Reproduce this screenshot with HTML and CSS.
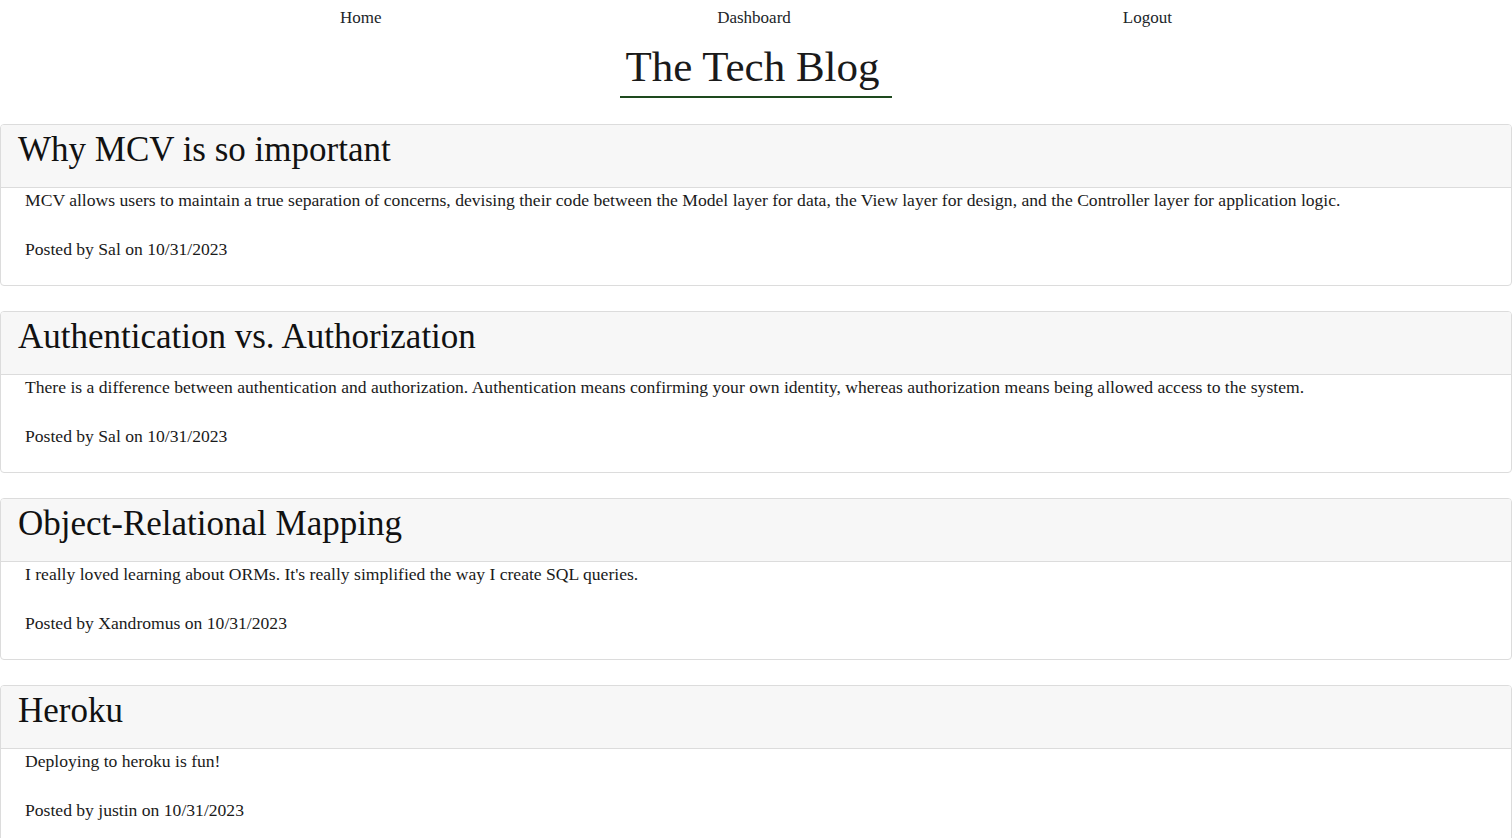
FILE: index.html
```html
<!DOCTYPE html>
<html lang="en">
<head>
<meta charset="utf-8">
<title>The Tech Blog</title>
<link rel="stylesheet" href="styles.css">
</head>
<body>
<header class="site-header">
  <nav class="nav">
    <a class="nav-link" href="#">Home</a>
    <a class="nav-link" href="#">Dashboard</a>
    <a class="nav-link" href="#">Logout</a>
  </nav>
  <div class="title-wrap">
    <h1 class="site-title">The Tech Blog</h1>
  </div>
</header>
<main class="posts">
  <article class="card">
    <div class="card-header"><h2 class="card-title">Why MCV is so important</h2></div>
    <div class="card-body">
      <p class="post-content">MCV allows users to maintain a true separation of concerns, devising their code between the Model layer for data, the View layer for design, and the Controller layer for application logic.</p>
      <p class="post-meta">Posted by Sal on 10/31/2023</p>
    </div>
  </article>
  <article class="card">
    <div class="card-header"><h2 class="card-title">Authentication vs. Authorization</h2></div>
    <div class="card-body">
      <p class="post-content">There is a difference between authentication and authorization. Authentication means confirming your own identity, whereas authorization means being allowed access to the system.</p>
      <p class="post-meta">Posted by Sal on 10/31/2023</p>
    </div>
  </article>
  <article class="card">
    <div class="card-header"><h2 class="card-title">Object-Relational Mapping</h2></div>
    <div class="card-body">
      <p class="post-content">I really loved learning about ORMs. It's really simplified the way I create SQL queries.</p>
      <p class="post-meta">Posted by Xandromus on 10/31/2023</p>
    </div>
  </article>
  <article class="card">
    <div class="card-header"><h2 class="card-title">Heroku</h2></div>
    <div class="card-body">
      <p class="post-content">Deploying to heroku is fun!</p>
      <p class="post-meta">Posted by justin on 10/31/2023</p>
    </div>
  </article>
</main>
</body>
</html>
```
FILE: styles.css
```css
html, body {
  margin: 0;
  padding: 0;
  background: #fff;
}

body {
  font-family: "Liberation Serif", "Times New Roman", serif;
  color: #212529;
}

.site-header {
  display: flex;
  flex-direction: column;
}

.nav {
  display: grid;
  grid-template-columns: repeat(3, 1fr);
  padding: 8px 168px 0 164px;
}

.nav-link {
  text-align: center;
  font-size: 17px;
  line-height: 20px;
  color: #212529;
  text-decoration: none;
}

.title-wrap {
  display: flex;
  justify-content: center;
  margin-top: 14px;
}

.site-title {
  margin: 0;
  font-weight: 400;
  font-size: 43px;
  line-height: 50px;
  padding: 0 12px 4px 5px;
  border-bottom: 2px solid #1e4a1e;
  color: #1a1a1a;
}

.posts {
  margin-top: 26px;
  display: flex;
  flex-direction: column;
  gap: 25px;
}

.card {
  border: 1px solid #dcdcdc;
  border-radius: 4px;
  overflow: hidden;
}

.card-header {
  background: #f7f7f7;
  border-bottom: 1px solid #dcdcdc;
  padding: 6px 17px 18px;
}

.card-title {
  margin: 0;
  font-weight: 400;
  font-size: 35px;
  line-height: 38px;
  color: #111;
}

.card-body {
  padding: 0 24px 24px;
  display: flex;
  flex-direction: column;
  gap: 25px;
}

.post-content,
.post-meta {
  margin: 0;
  font-size: 17.6px;
  line-height: 24px;
  color: #1a1a1a;
}
```
